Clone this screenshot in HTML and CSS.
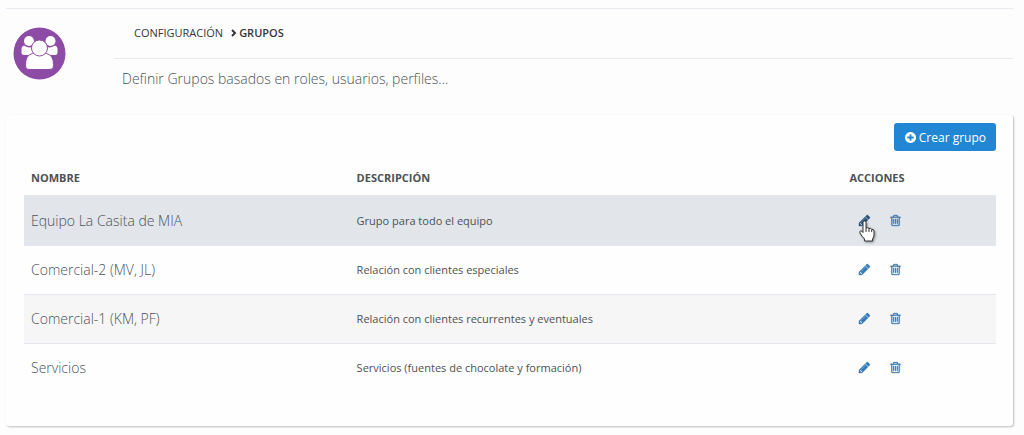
FILE: index.html
```html
<!DOCTYPE html>
<html lang="es">
<head>
    <meta charset="UTF-8">
    <meta name="viewport" content="width=device-width, initial-scale=1.0">
    <title>Grupos</title>
    <link rel="stylesheet" href="styles.css">
</head>
<body>
    <!-- iconos -->
    <svg class="sprite" aria-hidden="true">
        <symbol id="pencil" viewBox="0 0 1792 1792">
            <path d="M491 1536l91-91-235-235-91 91v107h128v128h107zm523-928q0-22-22-22-10 0-17 7l-542 542q-7 7-7 17 0 22 22 22 10 0 17-7l542-542q7-7 7-17zm-54-192l416 416-832 832h-416v-416zm683 96q0 53-37 90l-166 166-416-416 166-165q36-38 90-38 53 0 91 38l235 234q37 39 37 91z"/>
        </symbol>
        <symbol id="trash" viewBox="0 0 1792 1792">
            <path d="M704 736v576q0 14-9 23t-23 9h-64q-14 0-23-9t-9-23v-576q0-14 9-23t23-9h64q14 0 23 9t9 23zm256 0v576q0 14-9 23t-23 9h-64q-14 0-23-9t-9-23v-576q0-14 9-23t23-9h64q14 0 23 9t9 23zm256 0v576q0 14-9 23t-23 9h-64q-14 0-23-9t-9-23v-576q0-14 9-23t23-9h64q14 0 23 9t9 23zm128 724v-948h-896v948q0 22 7 40.500t14.500 27 10.500 8.500h832q3 0 10.500-8.500t14.500-27 7-40.500zm-672-1076h448l-48-117q-7-9-17-11h-317q-10 2-17 11zm928 32v64q0 14-9 23t-23 9h-96v948q0 83-47 143.500t-113 60.500h-832q-66 0-113-58.500t-47-141.500v-952h-96q-14 0-23-9t-9-23v-64q0-14 9-23t23-9h309l70-167q15-37 54-63t79-26h320q40 0 79 26t54 63l70 167h309q14 0 23 9t9 23z"/>
        </symbol>
    </svg>

    <div class="wrapper">
        <!-- cabecera -->
        <header class="header">
            <svg class="header-icon" viewBox="0 0 53 53" aria-hidden="true">
                <circle cx="26.500" cy="26.500" r="26" fill="#8e4ba6"/>
                <g fill="#fff">
                    <circle cx="16" cy="14" r="5"/>
                    <circle cx="37.500" cy="14" r="5"/>
                    <path d="M11 18.500q5 3.500 9 1v8.500h-9q-2.500 0-2.500-2.500v-4q0-2 2.500-3z"/>
                    <path d="M42 18.500q-5 3.500-9 1v8.500h9q2.500 0 2.500-2.500v-4q0-2-2.500-3z"/>
                </g>
                <g fill="#fff" stroke="#8e4ba6">
                    <path d="M19.500 26.500h14q7 1.500 7 11v1.500q0 3.500-3.500 3.500h-21q-3.500 0-3.500-3.500v-1.500q0-9.500 7-11z"/>
                    <circle cx="26.500" cy="21" r="8"/>
                </g>
            </svg>
            <div class="header-text">
                <nav class="breadcrumb">
                    <a href="#">CONFIGURACIÓN</a>
                    <svg class="angle" viewBox="0 0 6 8" aria-hidden="true"><path d="M1 1l3 3-3 3"/></svg>
                    <strong>GRUPOS</strong>
                </nav>
                <p class="subtitle">Definir Grupos basados en roles, usuarios, perfiles...</p>
            </div>
        </header>

        <!-- listado de grupos -->
        <main class="panel">
            <div class="toolbar">
                <button type="button" class="btn">
                    <svg class="btn-icon" viewBox="0 0 1792 1792" aria-hidden="true">
                        <path d="M1344 960v-128q0-26-19-45t-45-19h-256v-256q0-26-19-45t-45-19h-128q-26 0-45 19t-19 45v256h-256q-26 0-45 19t-19 45v128q0 26 19 45t45 19h256v256q0 26 19 45t45 19h128q26 0 45-19t19-45v-256h256q26 0 45-19t19-45zm320-64q0 209-103 385.500t-279.500 279.500-385.500 103-385.500-103-279.500-279.500-103-385.500 103-385.500 279.500-279.500 385.500-103 385.500 103 279.500 279.500 103 385.500z"/>
                    </svg>
                    Crear grupo
                </button>
            </div>
            <table class="table">
                <thead>
                    <tr>
                        <th class="col-name">NOMBRE</th>
                        <th class="col-desc">DESCRIPCIÓN</th>
                        <th>ACCIONES</th>
                    </tr>
                </thead>
                <tbody>
                    <tr class="active">
                        <td class="name">Equipo La Casita de MIA</td>
                        <td>Grupo para todo el equipo</td>
                        <td>
                            <div class="actions">
                                <a href="#" class="edit" aria-label="Editar">
                                    <svg class="icon"><use href="#pencil"/></svg>
                                    <svg class="cursor" viewBox="0 0 18 23" aria-hidden="true">
                                        <path d="M5 2.500q0-1.500 1.500-1.500T8 2.500V8q2-1 3 .5 2-.8 2.700.8 2.300-.3 2.300 2V15q0 2-1.500 4v2H6.500v-2Q4 16.500 2 13q-.8-2 .8-2.200Q4 11 5 12.500z"/>
                                        <path d="M8 8v4M11 8.500V12M13.700 9.500V12"/>
                                    </svg>
                                </a>
                                <a href="#" aria-label="Eliminar"><svg class="icon"><use href="#trash"/></svg></a>
                            </div>
                        </td>
                    </tr>
                    <tr>
                        <td class="name">Comercial-2 (MV, JL)</td>
                        <td>Relación con clientes especiales</td>
                        <td>
                            <div class="actions">
                                <a href="#" aria-label="Editar"><svg class="icon"><use href="#pencil"/></svg></a>
                                <a href="#" aria-label="Eliminar"><svg class="icon"><use href="#trash"/></svg></a>
                            </div>
                        </td>
                    </tr>
                    <tr class="odd">
                        <td class="name">Comercial-1 (KM, PF)</td>
                        <td>Relación con clientes recurrentes y eventuales</td>
                        <td>
                            <div class="actions">
                                <a href="#" aria-label="Editar"><svg class="icon"><use href="#pencil"/></svg></a>
                                <a href="#" aria-label="Eliminar"><svg class="icon"><use href="#trash"/></svg></a>
                            </div>
                        </td>
                    </tr>
                    <tr>
                        <td class="name">Servicios</td>
                        <td>Servicios (fuentes de chocolate y formación)</td>
                        <td>
                            <div class="actions">
                                <a href="#" aria-label="Editar"><svg class="icon"><use href="#pencil"/></svg></a>
                                <a href="#" aria-label="Eliminar"><svg class="icon"><use href="#trash"/></svg></a>
                            </div>
                        </td>
                    </tr>
                </tbody>
            </table>
        </main>
    </div>
</body>
</html>
```

FILE: styles.css
```css
*{
    box-sizing: border-box;
}
body{
    margin: 0;
    background-color: #fdfdfd;
    color: #4c5256;
    font-family: "Open Sans", "Noto Sans", sans-serif;
    font-size: 11px;
}
.sprite{
    display: none;
}
.wrapper{
    padding: 8px 11px 8px 6px;
}
/* cabecera */
.header{
    display: flex;
    gap: 48px;
    padding-left: 7px;
    border-top: 1px solid #e9eaf0;
}
.header-icon{
    flex: none;
    width: 53px;
    height: 53px;
    margin-top: 18px;
}
.header-text{
    flex: 1;
}
.breadcrumb{
    display: flex;
    align-items: center;
    height: 50px;
    padding: 0 0 2px 20px;
    border-bottom: 1px solid #e9eaf0;
    color: #33373a;
}
.breadcrumb a{
    color: inherit;
    text-decoration: none;
}
.breadcrumb strong{
    font-weight: 600;
}
.angle{
    width: 6px;
    height: 8px;
    margin: 0 2px 0 8px;
    fill: none;
    stroke: #33373a;
    stroke-width: 2;
}
.subtitle{
    margin: 0;
    padding: 10px 8px;
    font-size: 14px;
    font-weight: 300;
    line-height: 20px;
}
/* panel */
.panel{
    margin-top: 16px;
    padding: 8px 17px 34px 18px;
    border-radius: 3px;
    background-color: #fefefe;
    box-shadow: 1px 1px 2px rgba(0, 0, 0, .25);
}
.toolbar{
    display: flex;
    justify-content: flex-end;
}
.btn{
    display: flex;
    align-items: center;
    gap: 2px;
    height: 28px;
    padding: 0 10px;
    border: 0;
    border-radius: 3px;
    background-color: #2187d4;
    color: #fff;
    font-family: inherit;
    font-size: 12px;
    cursor: pointer;
}
.btn-icon{
    width: 13px;
    height: 13px;
    fill: #fff;
}
/* tabla */
.table{
    width: 100%;
    margin-top: 9px;
    border-collapse: collapse;
    table-layout: fixed;
}
.table th{
    height: 35px;
    padding: 0 7px;
    font-weight: 700;
    text-align: left;
}
.table td{
    height: 49px;
    padding: 0 7px;
    border-top: 1px solid #e4e7ee;
}
.table .active td{
    height: 50px;
    padding-top: 1px;
}
.table .name{
    font-size: 14px;
    font-weight: 300;
}
.col-name{
    width: 33.5%;
}
.col-desc{
    width: 50.7%;
}
.active{
    background-color: #e2e5ea;
}
.odd{
    background-color: #f6f6f7;
}
.actions{
    display: flex;
    gap: 18px;
    padding-left: 9px;
}
.actions a{
    position: relative;
    height: 13px;
}
.icon{
    display: block;
    width: 13px;
    height: 13px;
    fill: #337ab7;
    stroke: #337ab7;
    stroke-width: 40;
}
.edit .icon{
    fill: #23527c;
    stroke: #23527c;
}
.cursor{
    position: absolute;
    top: 6px;
    left: 0;
    width: 18px;
    height: 23px;
    fill: #fff;
    stroke: #333;
    filter: drop-shadow(1px 1px 1px rgba(0, 0, 0, .4));
}
```
